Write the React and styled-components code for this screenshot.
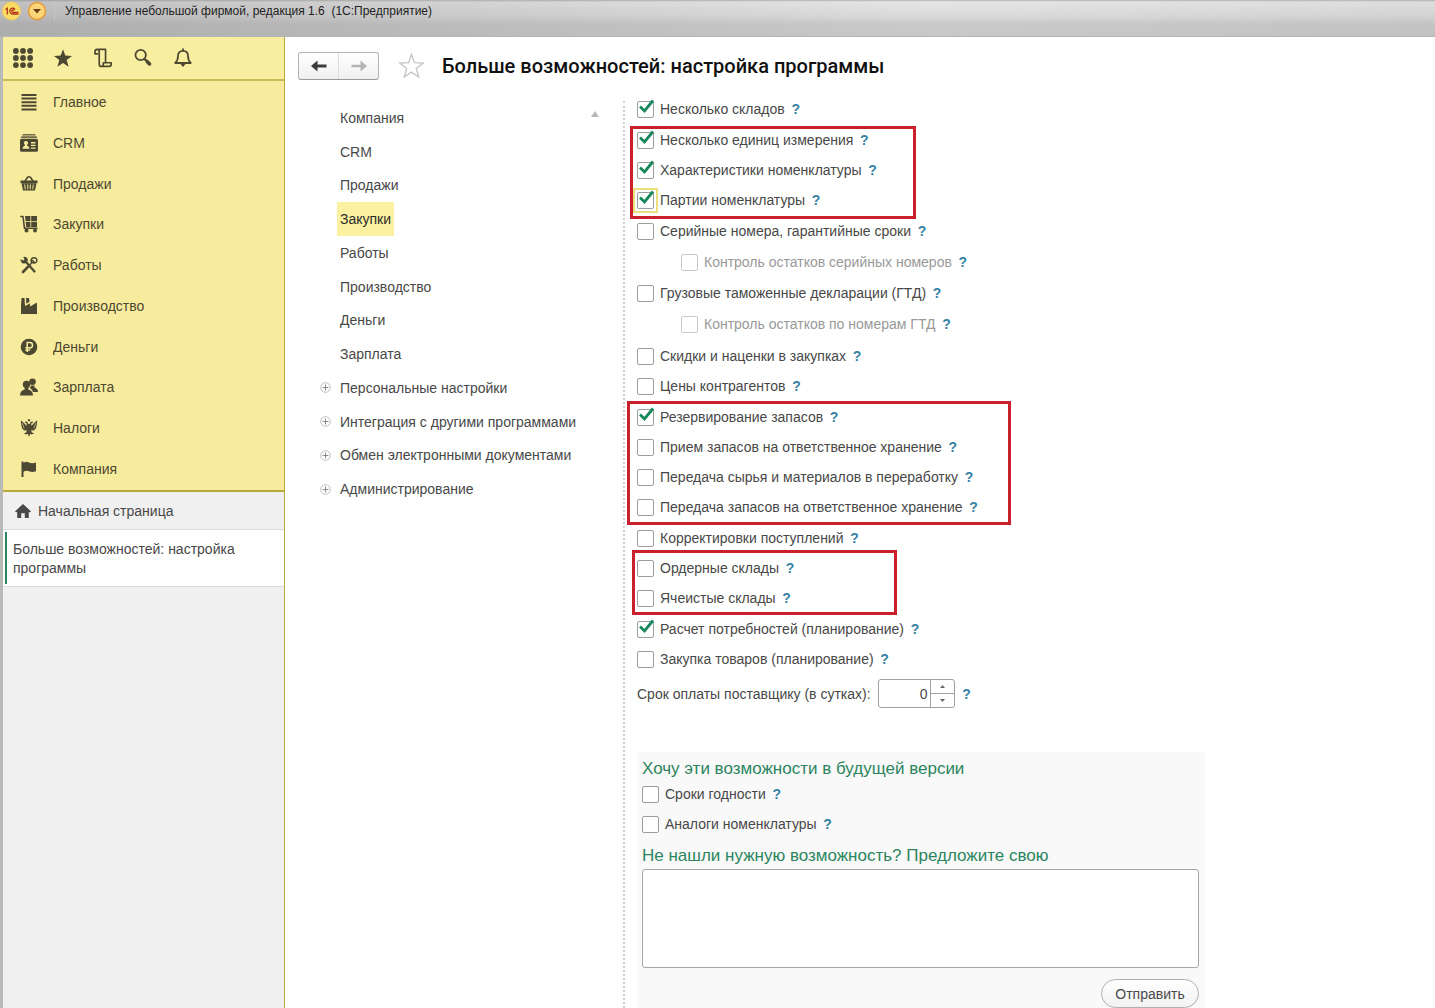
import React from "react";
import styled, { createGlobalStyle, css } from "styled-components";

const ink = "#4d4832";
const olive = "#b9a93c";
const green = "#2c8560";

const GlobalStyle = createGlobalStyle`
  *, *::before, *::after { box-sizing: border-box; }
  body {
    margin: 0;
    background: #fff;
    color: #484848;
    font: 14px/20px "Liberation Sans", Arial, sans-serif;
  }
  button, input, textarea { font: inherit; color: inherit; margin: 0; }
  button { padding: 0; border: 0; background: none; cursor: pointer; }
  a { color: inherit; text-decoration: none; }
  h1, h2 { margin: 0; }
  svg { display: block; }
`;

/* ---------- window ---------- */

const Window = styled.div`
  display: flex;
  flex-direction: column;
  height: 100vh;
  overflow: hidden;
`;

const TitleBar = styled.header`
  display: flex;
  align-items: flex-start;
  flex: none;
  height: 37px;
  padding: 1px 2px;
  border-bottom: 1px solid #b5b5b5;
  background:
    linear-gradient(90deg, rgba(120, 120, 120, 0.34), rgba(120, 120, 120, 0.1) 45%, transparent 65%, rgba(120, 120, 120, 0.08)),
    linear-gradient(#b4b4b4, #e6e6e6 2px, #dadada 16px, #cacaca 24px, #c8c8c8);
`;

const TitleButton = styled.button`
  margin-right: 5px;
`;

const WindowTitle = styled.span`
  margin-left: 2px;
  padding-left: 10px;
  border-left: 1px solid #c6c6c6;
  color: #222;
  font-size: 12px;
  line-height: 20px;
  white-space: pre;
`;

const Body = styled.div`
  display: flex;
  flex: 1;
  min-height: 0;
  border-left: 3px solid #b9b9b9;
`;

/* ---------- sidebar ---------- */

const Sidebar = styled.aside`
  display: flex;
  flex-direction: column;
  flex: none;
  width: 282px;
  border-right: 1px solid ${olive};
  background: #f0f0f0;
`;

const QuickBar = styled.div`
  display: flex;
  align-items: center;
  gap: 20px;
  flex: none;
  height: 44px;
  padding: 0 10px;
  border-bottom: 2px solid #c9ba55;
  background: #f8ee9f;
  color: ${ink};
`;

const Sections = styled.nav`
  display: grid;
  grid-auto-rows: 1fr;
  flex: none;
  height: 411px;
  padding: 1px 0;
  border-bottom: 2px solid ${olive};
  background: #f7ec9d;
`;

const SectionLink = styled.a`
  display: flex;
  align-items: center;
  gap: 15px;
  padding-left: 17px;
  color: ${ink};
`;

const HomeLink = styled.a`
  display: flex;
  align-items: center;
  gap: 7px;
  height: 38px;
  padding-left: 12px;
  border-bottom: 1px solid #dcdcdc;
`;

const OpenTab = styled.a`
  display: block;
  padding: 2px 0 2px 2px;
  border-bottom: 1px solid #dcdcdc;
  background: #fff;
`;

const OpenTabText = styled.span`
  display: block;
  padding: 8px 40px 6px 6px;
  border-left: 2px solid ${green};
  line-height: 19px;
`;

/* ---------- main area ---------- */

const Main = styled.main`
  display: flex;
  flex-direction: column;
  flex: 1;
  min-width: 0;
  background: #fff;
`;

const PageHeader = styled.div`
  display: flex;
  align-items: center;
  flex: none;
  height: 57px;
  padding-left: 13px;
`;

const History = styled.div`
  display: flex;
  height: 28px;
  border: 1px solid #b4b4b4;
  border-bottom-color: #989898;
  border-radius: 3px;
  background: linear-gradient(#fff, #f0f0f0);
`;

const HistoryButton = styled.button`
  display: grid;
  place-items: center;
  width: 39px;
  color: ${(p) => (p.disabled ? "#b4b4b4" : "#3c3c3c")};

  & + & {
    width: 40px;
    border-left: 1px solid #dcdcdc;
  }
`;

const FavoriteButton = styled.button`
  margin: 0 17px 0 19px;
`;

const PageTitle = styled.h1`
  color: #111;
  font: 500 20px/24px Roboto, "Liberation Sans", sans-serif;
`;

const Columns = styled.div`
  display: flex;
  flex: 1;
  min-height: 0;
`;

const Tree = styled.nav`
  display: flex;
  align-items: flex-start;
  flex: none;
  width: 340px;
  margin-top: 7px;
  padding: 0 24px 0 35px;
  border-right: 2px dotted #d2d2d2;
`;

const TreeList = styled.ul`
  display: grid;
  grid-auto-rows: minmax(0, 1fr);
  flex: 1;
  height: 405px;
  margin: 0;
  padding: 0;
  list-style: none;
`;

const TreeRow = styled.li`
  display: flex;
  align-items: center;
`;

const Expander = styled.span`
  width: 17px;
`;

const TreeLink = styled.a`
  padding: 7px 3px;
  white-space: nowrap;
  ${(p) => p.$active && css`
    background: #fbf1a0;
    color: #2c2c2c;
  `}
`;

const ScrollUp = styled.svg`
  flex: none;
  margin-top: 10px;
`;

const Form = styled.form`
  flex: 1;
  min-width: 0;
  padding-left: 12px;
`;

/* ---------- options ---------- */

const OptionGroup = styled.div`
  position: relative;
  margin-bottom: ${(p) => (p.$tight ? 0 : 1)}px;
`;

const RedFrame = styled.div`
  position: absolute;
  top: ${(p) => p.$top}px;
  bottom: ${(p) => p.$bottom}px;
  left: ${(p) => p.$left}px;
  width: ${(p) => p.$width}px;
  border: 3px solid #c9202b;
  pointer-events: none;
`;

const OptionRow = styled.div`
  display: flex;
  align-items: center;
  gap: 6px;
  height: ${(p) => (p.$nested ? 32 : 30)}px;
  padding-left: ${(p) => (p.$nested ? 44 : 0)}px;
  color: ${(p) => (p.$nested ? "#999" : "#484848")};
`;

const CheckWrap = styled.span`
  position: relative;
  width: 17px;
  height: 17px;
  outline: ${(p) => (p.$focused ? "2px solid #ecdf7c" : "none")};
  outline-offset: 2px;
`;

const CheckInput = styled.input`
  display: block;
  width: 17px;
  height: 17px;
  border: 1px solid #9d9d9d;
  border-radius: 2px;
  background: #fff;
  appearance: none;

  &:disabled { border-color: #cacaca; }
  & + svg { display: none; }
  &:checked + svg { display: block; }
`;

const CheckMark = styled.svg`
  position: absolute;
  top: -2px;
  left: 1px;
  pointer-events: none;
`;

const HelpButton = styled.button`
  width: 10px;
  color: #3682a4;
  font-weight: 700;
  text-align: center;
`;

const TermRow = styled.div`
  display: flex;
  align-items: center;
  gap: 7px;
  padding-top: 5px;
`;

const Spinner = styled.span`
  display: flex;
  width: 77px;
  height: 29px;
  border: 1px solid #a0a0a0;
  border-radius: 3px;
  background: #fff;
`;

const SpinnerInput = styled.input`
  flex: 1;
  min-width: 0;
  padding: 0 2px;
  border: 0;
  background: none;
  text-align: right;
`;

const SpinnerButtons = styled.span`
  display: flex;
  flex-direction: column;
  width: 24px;
  border-left: 1px solid #a0a0a0;
`;

const StepButton = styled.button`
  display: grid;
  place-items: center;
  flex: 1;

  & + & { border-top: 1px solid #a0a0a0; }
`;

/* ---------- wishes ---------- */

const Wishes = styled.section`
  max-width: 568px;
  margin-top: 44px;
  padding: 7px 6px 12px 5px;
  background: #f9f9f9;
`;

const WishTitle = styled.h2`
  color: ${green};
  font-size: 17px;
  font-weight: 400;
  line-height: 20px;
  & ~ & { margin-top: 7px; }
`;

const WishText = styled.textarea`
  display: block;
  width: 100%;
  height: 99px;
  margin-top: 3px;
  border: 1px solid #a6a6a6;
  border-radius: 3px;
  background: #fff;
  resize: none;
`;

const SendButton = styled.button`
  display: block;
  width: 98px;
  height: 29px;
  margin: 11px 0 0 auto;
  border: 1px solid #b0b0b0;
  border-radius: 15px;
  background: linear-gradient(#fff, #f2f2f2);
`;

/* ---------- drawings ---------- */

const Icon = ({ size = 18, children }) => (
  <svg width={size} height={size} viewBox="0 0 18 18" fill="currentColor" aria-hidden="true">
    {children}
  </svg>
);

const STAR = "M9 0 11.3 6.4 18 6.7 12.7 10.9 14.6 17.5 9 13.7 3.4 17.5 5.3 10.9 0 6.7 6.7 6.4Z";
const line = { fill: "none", stroke: "currentColor", strokeLinecap: "round", strokeLinejoin: "round" };

const quick = [
  ["Меню функций", <Icon size={20}>{[2.6, 9, 15.4].map((x) => [2.6, 9, 15.4].map((y) => <circle key={x + "-" + y} cx={x} cy={y} r="2.6" />))}</Icon>],
  ["Избранное", <Icon size={20}><path transform="translate(.9 1.1) scale(.9)" d={STAR} /></Icon>],
  ["История", <Icon size={20}><path {...line} strokeWidth="1.5" d="M4 5.3H1.8V3.4C1.8 2 2.6 1.3 3.8 1.3H11.3V13.2M3.8 1.3C5 1.3 5.6 2.3 5.6 3.4V14.3C5.6 15.8 6.4 16.6 7.5 16.6H14.6C15.8 16.6 16.4 15.7 16.4 14.5V13.3H9.3V14.6C9.3 15.8 8.6 16.6 7.5 16.6" /></Icon>],
  ["Поиск", <Icon size={20}><circle {...line} strokeWidth="1.6" cx="6.9" cy="6.3" r="4.7" /><path {...line} strokeWidth="2" d="M10.5 10 12 11.4" /><path {...line} strokeWidth="3.2" d="M12.9 12.3 14.9 14.3" /></Icon>],
  ["Уведомления", <Icon size={20}><path {...line} strokeWidth="1.6" d="M2 13.5C4.2 11.8 4.500 10 4.500 7.300C4.500 4.300 6.300 2.500 9 2.500S13.500 4.300 13.500 7.300C13.500 10 13.800 11.800 16 13.500ZM9 2.300V1" /><path d="M6.700 14.500H11.300L9 17Z" /></Icon>],
];

const sections = [
  ["Главное", <path d="M1.5 1h15v2h-15zM1.5 4.6h15v2h-15zM1.5 8.2h15v2h-15zM1.5 11.8h15v2h-15zM1.5 15.4h15v2h-15z" />],
  ["CRM", <><path d="M3 0h12l1 1.400H2zM1.600 2.200h14.800l1 1.800H.6z" opacity=".8" /><path fillRule="evenodd" d="M1.500 4.700h15q1.500 0 1.500 1.500v10q0 1.500-1.500 1.500h-15Q0 17.700 0 16.200v-10q0-1.500 1.500-1.500zM6 7a2 2 0 0 0-1.100 3.700v1C3.500 12.200 2.500 13 2.500 14.800h7c0-1.800-1-2.600-2.400-3.100v-1A2 2 0 0 0 6 7zM11 8v1.400h4.500V8zM11 10.700v1.400h4.500v-1.400zM11 13.400v1.400h4.500v-1.400z" /></>],
  ["Продажи", <><path {...line} strokeWidth="1.5" d="M4.500 7 7.300 2.500Q9 .8 10.700 2.500L13.500 7" /><path d="M.5 5.500h17v2.700H.5z" /><path fillRule="evenodd" d="M1.500 8.200h15L15 15.600H3zM4.200 9.500l.6 4.700h.9l-.5-4.700zM7.200 9.500l.2 4.700h.9V9.500zM9.800 9.500v4.700h.9l.2-4.700zM12.800 9.500l-.5 4.700h.9l.6-4.700z" /></>],
  ["Закупки", <><path {...line} strokeWidth="1.6" d="M.8 1.500H3L4.500 13.300H17" /><path d="M5 1h5.400v5H5.600zM11.200 1H17v5h-5.800zM5.700 6.800h4.700V12H6.200zM11.200 6.800H17V12h-5.800z" /><circle cx="6.5" cy="15.5" r="2" /><circle cx="15" cy="15.5" r="2" /></>],
  ["Работы", <><path {...line} strokeWidth="2.3" d="M6.500 6.500 14.500 15.500" /><path d="M.5 3.200 3.200 4.600 4.500 3.300 3.300.9Q6.500.2 7.700 2.900 8.300 5.200 6.500 6.800 4.300 8.300 2 7 .300 5.700.5 3.200Z" /><path {...line} strokeWidth="2.6" d="M3 16 8.200 10.600" /><path {...line} strokeWidth="1.5" d="M9.500 9.200 12 6.500M11.500 6.600Q10.200 2.500 13.500 1.700 17.200 1.500 16.800 5 15.900 8 11.500 6.600ZM12.500 4.600 14.300 6.200" /></>],
  ["Производство", <path d="M1.500 1h3l.4 6.600L5.500 9 10 6.200V9.500L17 5.500V17H1V9.200zM6 1h3l.5 3.700-3.200 2z" />],
  ["Деньги", <><circle cx="9" cy="9" r="8.3" /><path d="M7.200 14V4.600h2.700a2.600 2.600 0 0 1 0 5.200H5.400M5.400 12h4.800" fill="none" stroke="#f7ec9d" strokeWidth="1.5" /></>],
  ["Зарплата", <><circle cx="12.5" cy="3.8" r="3.3" /><path d="M11 7.500h3.500v2Q18 10.600 18 14h-5Q12 11 10 10.200z" /><circle cx="6.5" cy="6.5" r="3.7" /><path d="M4.700 9.500h3.600v2Q12.800 12.500 13 17.500H0Q.2 12.500 4.700 11.500z" /></>],
  ["Налоги", <><path d="M9 0 10.300.8 9.700 2.200H8.300L7.700.8ZM7.200 2.700Q5.200 1.800 4.800 3.500L6.600 4.200Q7 5.400 6.300 6.900L5 5 .8 1.200 1.200 5.500 2 9.200 4.200 11.400 6.800 11.200 6.200 13.400 3.700 14.200 6.300 15.600 7.800 14.800 9 17.900 10.200 14.800 11.700 15.600 14.300 14.200 11.800 13.400 11.200 11.200 13.800 11.400 16 9.200 16.800 5.500 17.200 1.200 13 5 11.700 6.900Q11 5.400 11.400 4.200L13.200 3.500Q12.800 1.800 10.800 2.700L9.600 5H8.400Z" /><path d="M2.200 4 4.200 9.500M15.800 4 13.800 9.500" stroke="#f7ec9d" strokeWidth=".6" /></>],
  ["Компания", <path d="M1.500 1.500h2V3Q6 1 9 2.500q3 1.500 7 0v8.800q-4 1.500-7 0-3-1.300-5.500.4V17h-2z" />],
];

const tree = [
  ["Компания"], ["CRM"], ["Продажи"], ["Закупки", "active"], ["Работы"], ["Производство"], ["Деньги"], ["Зарплата"],
  ["Персональные настройки", "closed"],
  ["Интеграция с другими программами", "closed"],
  ["Обмен электронными документами", "closed"],
  ["Администрирование", "closed"],
];

const groups = [
  { rows: [["Несколько складов", "on"]] },
  {
    frame: { $top: 1, $bottom: -4, $left: -7, $width: 286 },
    rows: [["Несколько единиц измерения", "on"], ["Характеристики номенклатуры", "on"], ["Партии номенклатуры", "on focused"]],
  },
  {
    rows: [
      ["Серийные номера, гарантийные сроки"],
      ["Контроль остатков серийных номеров", "nested"],
      ["Грузовые таможенные декларации (ГТД)"],
      ["Контроль остатков по номерам ГТД", "nested"],
    ],
  },
  { rows: [["Скидки и наценки в закупках"], ["Цены контрагентов"]] },
  {
    frame: { $top: -1, $bottom: -3, $left: -10, $width: 384 },
    rows: [
      ["Резервирование запасов", "on"],
      ["Прием запасов на ответственное хранение"],
      ["Передача сырья и материалов в переработку"],
      ["Передача запасов на ответственное хранение"],
    ],
  },
  { tight: true, rows: [["Корректировки поступлений"]] },
  { frame: { $top: -3, $bottom: -2, $left: -5, $width: 265 }, rows: [["Ордерные склады"], ["Ячеистые склады"]] },
  { tight: true, rows: [["Расчет потребностей (планирование)", "on"], ["Закупка товаров (планирование)"]] },
];

function Help() {
  return <HelpButton type="button" aria-label="Справка">?</HelpButton>;
}

function Option({ text, state = "" }) {
  const id = React.useId();
  const nested = state.includes("nested");
  return (
    <OptionRow $nested={nested}>
      <CheckWrap $focused={state.includes("focused")}>
        <CheckInput id={id} type="checkbox" defaultChecked={state.includes("on")} disabled={nested} />
        <CheckMark width="17" height="15" viewBox="0 0 17 15" aria-hidden="true">
          <path d="M2 7.500 6.500 12 15 1.500" fill="none" stroke="#16875a" strokeWidth="2.800" />
        </CheckMark>
      </CheckWrap>
      <label htmlFor={id}>{text}</label>
      <Help />
    </OptionRow>
  );
}

export default function App() {
  return (
    <Window>
      <GlobalStyle />
      <TitleBar>
        <TitleButton aria-label="1С">
          <svg width="20" height="20" viewBox="0 0 20 20">
            <circle cx="9.5" cy="10" r="9" fill="#fbdc62" stroke="#eccb6a" />
            <path d="M3.500 8.500 5.300 7.200V13.500M13 8.400A2.900 2.900 0 1 0 10.500 13H16.500M12.300 9.600A1.300 1.300 0 1 0 10.700 11.300H16.500" fill="none" stroke="#b3331c" strokeWidth="1.3" />
          </svg>
        </TitleButton>
        <TitleButton aria-label="Главное меню">
          <svg width="20" height="20" viewBox="0 0 20 20">
            <circle cx="10" cy="10" r="8.5" fill="#fbd578" stroke="#e59a3a" strokeWidth="1.5" />
            <path d="M6 8h8l-4 4.500z" fill="#6b3f16" />
          </svg>
        </TitleButton>
        <WindowTitle>Управление небольшой фирмой, редакция 1.6  (1С:Предприятие)</WindowTitle>
      </TitleBar>

      <Body>
        <Sidebar>
          <QuickBar>
            {quick.map(([name, icon]) => <button key={name} aria-label={name}>{icon}</button>)}
          </QuickBar>
          <Sections>
            {sections.map(([name, shape]) => (
              <SectionLink href="#" key={name}><Icon>{shape}</Icon>{name}</SectionLink>
            ))}
          </Sections>
          <HomeLink href="#">
            <Icon size={16}><path d="M9 1 18 9.500 16.800 10.600 15.500 9.800V17H11V11.500H7V17H2.500V9.800L1.200 10.600 0 9.500Z" /></Icon>
            Начальная страница
          </HomeLink>
          <OpenTab href="#"><OpenTabText>Больше возможностей: настройка программы</OpenTabText></OpenTab>
        </Sidebar>

        <Main>
          <PageHeader>
            <History>
              <HistoryButton aria-label="Назад">
                <svg width="18" height="14" viewBox="0 0 18 14"><path d="M1 7 7.500 1.500V5.500H16.500V8.500H7.500V12.500Z" fill="currentColor" /></svg>
              </HistoryButton>
              <HistoryButton aria-label="Вперед" disabled>
                <svg width="18" height="14" viewBox="0 0 18 14"><path d="M17 7 10.500 1.500V5.800H1.500V8.200H10.500V12.500Z" fill="currentColor" /></svg>
              </HistoryButton>
            </History>
            <FavoriteButton aria-label="Добавить в избранное">
              <svg width="27" height="26" viewBox="-1 -1 20 20"><path d={STAR} fill="none" stroke="#c4c4c4" /></svg>
            </FavoriteButton>
            <PageTitle>Больше возможностей: настройка программы</PageTitle>
          </PageHeader>

          <Columns>
            <Tree>
              <TreeList>
                {tree.map(([name, state]) => (
                  <TreeRow key={name}>
                    <Expander>
                      {state === "closed" && (
                        <svg width="11" height="11" viewBox="0 0 11 11">
                          <circle cx="5.5" cy="5.5" r="4.8" fill="none" stroke="#bdbdbd" />
                          <path d="M2.500 5.500h6M5.500 2.500v6" stroke="#8a8a8a" />
                        </svg>
                      )}
                    </Expander>
                    <TreeLink href="#" $active={state === "active"}>{name}</TreeLink>
                  </TreeRow>
                ))}
              </TreeList>
              <ScrollUp width="8" height="6" viewBox="0 0 8 6"><path d="M0 6 4 0 8 6Z" fill="#b8b8b8" /></ScrollUp>
            </Tree>

            <Form onSubmit={(e) => e.preventDefault()}>
              {groups.map((group) => (
                <OptionGroup key={group.rows[0][0]} $tight={group.tight}>
                  {group.rows.map(([text, state]) => <Option key={text} text={text} state={state} />)}
                  {group.frame && <RedFrame {...group.frame} />}
                </OptionGroup>
              ))}
              <TermRow>
                <label htmlFor="term">Срок оплаты поставщику (в сутках):</label>
                <Spinner>
                  <SpinnerInput id="term" type="text" inputMode="numeric" defaultValue="0" />
                  <SpinnerButtons>
                    <StepButton type="button" aria-label="Увеличить"><svg width="5" height="3" viewBox="0 0 5 3"><path d="M0 3 2.500 0 5 3Z" fill="#666" /></svg></StepButton>
                    <StepButton type="button" aria-label="Уменьшить"><svg width="5" height="3" viewBox="0 0 5 3"><path d="M0 0 2.500 3 5 0Z" fill="#666" /></svg></StepButton>
                  </SpinnerButtons>
                </Spinner>
                <Help />
              </TermRow>

              <Wishes>
                <WishTitle>Хочу эти возможности в будущей версии</WishTitle>
                <Option text="Сроки годности" />
                <Option text="Аналоги номенклатуры" />
                <WishTitle id="wish-title">Не нашли нужную возможность? Предложите свою</WishTitle>
                <WishText aria-labelledby="wish-title" />
                <SendButton type="submit">Отправить</SendButton>
              </Wishes>
            </Form>
          </Columns>
        </Main>
      </Body>
    </Window>
  );
}
